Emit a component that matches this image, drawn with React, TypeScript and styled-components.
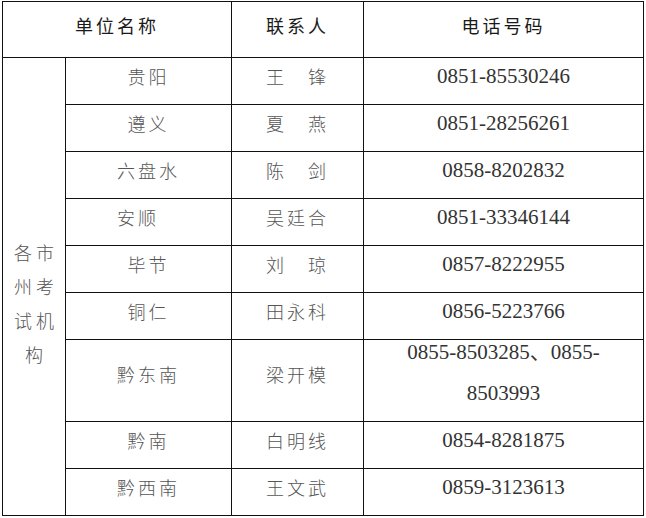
import styled, { createGlobalStyle } from 'styled-components';

const GlobalStyle = createGlobalStyle`
  body {
    margin: 0;
    background: #fff;
    font-family: "Noto Sans CJK SC", sans-serif;
  }
`;

type Contact = {
  unit: string;
  person: string;
  phone: string[];
  tall?: boolean;
};

const CONTACTS: Contact[] = [
  { unit: '贵阳', person: '王　锋', phone: ['0851-85530246'] },
  { unit: '遵义', person: '夏　燕', phone: ['0851-28256261'] },
  { unit: '六盘水', person: '陈　剑', phone: ['0858-8202832'] },
  { unit: '安顺　', person: '吴廷合', phone: ['0851-33346144'] },
  { unit: '毕节', person: '刘　琼', phone: ['0857-8222955'] },
  { unit: '铜仁', person: '田永科', phone: ['0856-5223766'] },
  {
    unit: '黔东南',
    person: '梁开模',
    phone: ['0855-8503285、0855-', '8503993'],
    tall: true,
  },
  { unit: '黔南', person: '白明线', phone: ['0854-8281875'] },
  { unit: '黔西南', person: '王文武', phone: ['0859-3123613'] },
];

function App() {
  return (
    <>
      <GlobalStyle />
      <Page>
        <Table>
          <HeadCell $span={2}>单位名称</HeadCell>
          <HeadCell>联系人</HeadCell>
          <HeadCell>电话号码</HeadCell>

          <RegionCell>各市州考试机构</RegionCell>

          {CONTACTS.map((c) => (
            <Row key={c.unit}>
              <NameCell $tall={c.tall}>{c.unit}</NameCell>
              <NameCell $tall={c.tall}>{c.person}</NameCell>
              <PhoneCell $tall={c.tall}>
                {c.phone.map((line) => (
                  <PhoneLine key={line}>{line}</PhoneLine>
                ))}
              </PhoneCell>
            </Row>
          ))}
        </Table>
      </Page>
    </>
  );
}

export default App;

const Page = styled.div`
  padding: 1px 0 0 2px;
`;

const Table = styled.div`
  display: grid;
  grid-template-columns: 62px 165px 131px 279px;
  grid-template-rows: 55px repeat(6, 46px) 81px 46px 46px;
  gap: 1px;
  padding: 1px;
  width: max-content;
  background: #111;
`;

const Row = styled.div`
  display: contents;
`;

const Cell = styled.div`
  background: #fff;
  display: flex;
  align-items: center;
  justify-content: center;
  white-space: pre;
`;

const HeadCell = styled(Cell)<{ $span?: number }>`
  grid-column: span ${({ $span }) => $span || 1};
  padding-bottom: 10px;
  font-size: 18px;
  font-weight: 400;
  letter-spacing: 3px;
  color: #1a1a1a;
`;

const RegionCell = styled(Cell)`
  grid-column: 1;
  grid-row: 2 / span 9;
  align-items: flex-start;
  padding: 177px 0 0 4px;
  white-space: normal;
  font-size: 18px;
  font-weight: 300;
  line-height: 34px;
  letter-spacing: 4px;
  text-align: center;
  color: #555;
`;

const NameCell = styled(Cell)<{ $tall?: boolean }>`
  padding-bottom: ${({ $tall }) => ($tall ? 13 : 11)}px;
  font-size: 18px;
  font-weight: 300;
  letter-spacing: 3px;
  color: #555;
`;

const PhoneCell = styled(Cell)<{ $tall?: boolean }>`
  flex-direction: column;
  gap: 17px;
  padding-bottom: ${({ $tall }) => ($tall ? 17 : 11)}px;
  font-family: "Liberation Serif", "Noto Sans CJK SC", serif;
  font-size: 21px;
  color: #333;
`;

const PhoneLine = styled.span`
  line-height: 24px;
`;
